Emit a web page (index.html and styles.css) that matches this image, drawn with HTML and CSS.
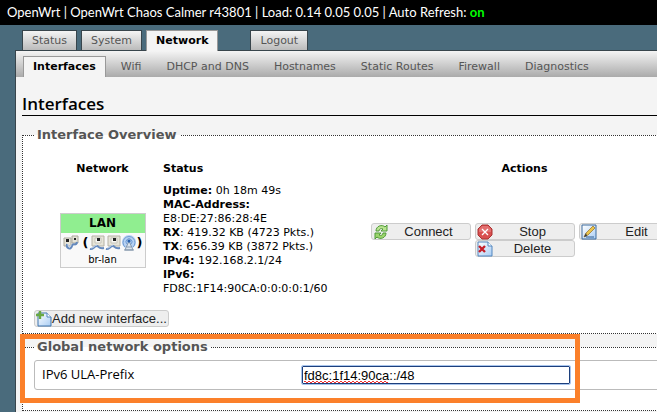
FILE: index.html
```html
<!DOCTYPE html>
<html lang="en">
<head>
<meta charset="utf-8">
<title>OpenWrt - Interfaces</title>
<link rel="stylesheet" href="styles.css">
</head>
<body>
<svg class="defs" aria-hidden="true">
  <defs>
    <linearGradient id="paper" x1="0" y1="0" x2="1" y2="1"><stop offset="0" stop-color="#fff"/><stop offset="1" stop-color="#a9cdf4"/></linearGradient>
    <symbol id="port" viewBox="0 0 16 16">
      <path d="M3 1h12v10H3z" fill="#e6e4d8" stroke="#b5b2a5"/>
      <path d="M6 3h6v5H6z" fill="#f8f8f4" stroke="#c6c4ba"/>
      <path d="M8 3h3v3H8z" fill="#222"/>
      <path d="M1 14c3 1 4-3 7-3 2 0 1 3 7 2" fill="none" stroke="#6489bd" stroke-width="2"/>
      <path d="M2 13c3 0 4-3 6-3" fill="none" stroke="#bfd3ef"/>
    </symbol>
    <symbol id="bridge" viewBox="0 0 16 16">
      <path d="M1 3h7v8H1zM9 1h6v7H9z" fill="#e6e4d8" stroke="#aaa89c"/>
      <path d="M3 4h3v3H3zM11 3h2v2h-2z" fill="#222"/>
      <path d="M4 9c-1 5 4 6 5 2s4 1 5-4" fill="none" stroke="#6489bd" stroke-width="2"/>
      <path d="M5 9c0 4 2 4 3 1" fill="none" stroke="#c4d5ef"/>
    </symbol>
  </defs>
</svg>

<header class="topbar">OpenWrt | OpenWrt Chaos Calmer r43801 | Load: 0.14 0.05 0.05 | Auto Refresh: <a class="refresh" href="#">on</a></header>

<div class="page">
  <nav class="tabs main-tabs" aria-label="Main">
    <a href="#">Status</a>
    <a href="#">System</a>
    <a href="#" class="active">Network</a>
    <a href="#" class="logout">Logout</a>
  </nav>
  <main class="panel">
    <nav class="tabs sub-tabs" aria-label="Network">
      <a href="#" class="active">Interfaces</a>
      <a href="#">Wifi</a>
      <a href="#">DHCP and DNS</a>
      <a href="#">Hostnames</a>
      <a href="#">Static Routes</a>
      <a href="#">Firewall</a>
      <a href="#">Diagnostics</a>
    </nav>
    <div class="content">
      <h1>Interfaces</h1>

      <fieldset class="section overview">
        <legend>Interface Overview</legend>
        <table class="networks">
          <thead>
            <tr><th class="col-network">Network</th><th class="col-status">Status</th><th class="col-actions">Actions</th></tr>
          </thead>
          <tbody>
            <tr>
              <td>
                <div class="ifacebox">
                  <strong class="iface-name">LAN</strong>
                  <div class="iface-ports">
                    <svg class="icon bridge"><use href="#bridge"/></svg>
                    <b>(</b><svg class="icon"><use href="#port"/></svg><svg class="icon"><use href="#port"/></svg><svg class="icon" viewBox="0 0 16 16"><circle cx="8" cy="7" r="7" fill="#b7d2f3"/><path d="M4 12A6 6 0 1 1 12 12M6 9A3 3 0 1 1 10 9" fill="none" stroke="#6f9ad2"/><path d="M8 6l-4 9h8z" fill="#dce5ee" stroke="#8497ad"/><path d="M6 12h4M3 15h10" stroke="#8799ad"/><circle cx="8" cy="6" r="1.6" fill="#2860ad"/></svg><b>)</b>
                  </div>
                  <div class="iface-device">br-lan</div>
                </div>
              </td>
              <td class="status">
                <strong>Uptime:</strong> 0h 18m 49s<br>
                <strong>MAC-Address:</strong><br>
                E8:DE:27:86:28:4E<br>
                <strong>RX</strong>: 419.32 KB (4723 Pkts.)<br>
                <strong>TX</strong>: 656.39 KB (3872 Pkts.)<br>
                <strong>IPv4:</strong> 192.168.2.1/24<br>
                <strong>IPv6:</strong><br>
                FD8C:1F14:90CA:0:0:0:0:1/60
              </td>
              <td>
                <div class="actions">
                  <button type="button"><svg class="icon" viewBox="0 0 16 16"><path d="M3 7c0-5 6-7 9-4l2-2v6H8l2-2C8 4 6 5 6 7z" fill="#b9e390" stroke="#4f9a38"/><path d="M13 9c0 5-6 7-9 4l-2 2V9h6l-2 2c2 1 4 0 4-2z" fill="#9bd46c" stroke="#4f9a38"/></svg><span>Connect</span></button>
                  <button type="button"><svg class="icon" viewBox="0 0 16 16"><path d="M5 1h6l4 4v6l-4 4H5l-4-4V5z" fill="#d94f4f" stroke="#a93232"/><path d="M5 2h6l3 3v3H2V5z" fill="#e98787" opacity=".6"/><path d="M5 5l6 6M11 5l-6 6" stroke="#fff" stroke-width="1.3"/></svg><span>Stop</span></button>
                  <button type="button"><svg class="icon" viewBox="0 0 16 16"><path d="M1 1h14v14H1z" fill="url(#paper)" stroke="#3b6a9e"/><path d="M3 13l2-4 7-7 2 2-7 7z" fill="#eac44a" stroke="#9b7a38" stroke-width=".8"/><path d="M3 13l2-4 1 3z" fill="#3d3d3d"/><path d="M5 13h8" stroke="#2e5c91"/></svg><span>Edit</span></button>
                  <button type="button"><svg class="icon" viewBox="0 0 16 16"><path d="M1 1h10l4 4v10H1z" fill="url(#paper)" stroke="#5286be"/><path d="M11 1v4h4" fill="#fff" stroke="#5286be"/><path d="M2 5l6 6M8 5l-6 6" stroke="#c51f2a" stroke-width="2.4"/></svg><span>Delete</span></button>
                </div>
              </td>
            </tr>
          </tbody>
        </table>
        <button type="button" class="add"><svg class="icon" viewBox="0 0 16 16"><path d="M2 2h9l4 4v9H2z" fill="url(#paper)" stroke="#3e74ae"/><path d="M11 2v4h4" fill="#fff" stroke="#5286be"/><path d="M4 0v8M0 4h8" stroke="#69a842" stroke-width="2.4"/></svg>Add new interface...</button>
      </fieldset>

      <div class="globals">
        <fieldset class="section">
          <legend>Global network options</legend>
          <div class="option">
            <label for="ula">IPv6 ULA-Prefix</label>
            <div class="field">
              <input id="ula" type="text" value="fd8c:1f14:90ca::/48" spellcheck="false">
              <span class="squiggle"></span>
            </div>
          </div>
        </fieldset>
        <div class="highlight"></div>
      </div>
    </div>
  </main>
</div>
</body>
</html>
```
FILE: styles.css
```css
* { box-sizing: border-box; }

html { overflow: hidden; }

body {
  margin: 0;
  overflow: hidden;
  background: #4a6b7c;
  color: #000;
  font: 11px/14px "DejaVu Sans", Verdana, sans-serif;
}

a { color: inherit; text-decoration: none; }

.defs { position: absolute; width: 0; height: 0; }
.icon { width: 16px; height: 16px; flex: none; }

.topbar {
  padding: 0 7px;
  background: #000;
  color: #fff;
  font: 13px/25px Lato, "Trebuchet MS", sans-serif;
  white-space: nowrap;
}
.refresh { color: #0f0; font-weight: bold; }

.page { min-width: 708px; padding: 5px 0 0 15px; }

.tabs { display: flex; gap: 4px; white-space: nowrap; }
.tabs a {
  padding: 3px 9px 0;
  border: 1px solid transparent;
  border-bottom: 0;
  color: #555;
}
.tabs .active { color: #000; font-weight: bold; background: #f4f4f4; }

.main-tabs { padding-left: 7px; }
.main-tabs a {
  height: 20px;
  border-color: #38454c;
  background: linear-gradient(#f4f4f4, #bbb);
}
.main-tabs .active { height: 21px; margin-bottom: -1px; border-color: #999; position: relative; }
.main-tabs .logout { margin-left: 28px; }

.panel {
  border: 1px solid #38454c;
  border-width: 1px 0 0 1px;
  background: #f4f4f4;
}

.sub-tabs {
  gap: 5px;
  padding: 5px 7px 0;
  background: linear-gradient(#f4f4f4, #aaa);
}
.sub-tabs a { height: 21px; }
.sub-tabs .active { border-color: #999; }

.content { padding: 16px 6px 20px; }

h1 {
  margin: 0 0 12px;
  border-bottom: 1px solid #000;
  font: 600 17px/22px "Open Sans", "Trebuchet MS", sans-serif;
}

.section {
  min-width: 0;
  margin: 0;
  padding: 0 11px 6px;
  border: 1px dotted #333;
  background: #fff;
}
.section legend {
  padding: 0 3px;
  color: #555;
  font: bold 13px/14px "DejaVu Sans", Verdana, sans-serif;
}

.networks {
  width: calc(100% - 12px);
  margin-left: 12px;
  border-collapse: collapse;
  table-layout: fixed;
}
.networks th { padding: 20px 4px 0; height: 42px; vertical-align: top; }
.networks td { padding: 0; }
.col-network { width: 113px; }
.networks .col-status { width: 200px; text-align: left; }
.networks .status { padding: 0 4px; white-space: nowrap; }

.ifacebox {
  width: 86px;
  margin: 0 auto;
  border: 1px solid #ccc;
  background: #f9f9f9;
  text-align: center;
}
.iface-name { display: block; background: #90ee90; line-height: 19px; font-size: 12px; }
.iface-ports { display: flex; align-items: center; justify-content: center; height: 20px; }
.iface-ports b { font-size: 13px; }
.iface-ports .bridge { margin-right: 4px; }
.iface-device { font-size: 10px; line-height: 14px; }

button {
  display: flex;
  align-items: center;
  height: 17px;
  padding: 0 1px;
  border: 1px solid #ccc;
  border-radius: 3px;
  background: #eee;
  color: #222;
  font: 13px/15px "Liberation Sans", Arial, sans-serif;
}
button span { flex: 1; text-align: center; }
.actions { display: flex; flex-wrap: wrap; justify-content: center; column-gap: 4px; }
.actions button { width: 100px; }
.add { margin-top: 14px; white-space: nowrap; }

.globals { position: relative; margin-top: 6px; }
.option {
  display: flex;
  align-items: flex-start;
  margin: 6px 0 14px;
  padding: 5px 7px;
  min-height: 30px;
  border: 1px solid #bbb;
  border-radius: 3px;
  font: 13px/16px "Open Sans", Tahoma, sans-serif;
}
.option label { width: 260px; }
.field { position: relative; }
.field input {
  display: block;
  width: 268px;
  height: 18px;
  padding: 0 1px;
  border: 1px solid #1c3f7c;
  outline: 1px solid #a8c4ec;
  border-radius: 1px;
  background: #fff;
  font: 13px/16px "Liberation Sans", Arial, sans-serif;
}
.squiggle {
  position: absolute;
  left: 2px;
  bottom: 1px;
  width: 84px;
  height: 2px;
  background:
    repeating-linear-gradient(90deg, #e33 0 2px, transparent 2px 4px) 0 0 / 100% 1px no-repeat,
    repeating-linear-gradient(90deg, transparent 0 2px, #e33 2px 4px) 0 1px / 100% 1px no-repeat;
}
.highlight {
  position: absolute;
  top: -6px;
  left: -2px;
  width: 560px;
  height: 69px;
  border: 5px solid #fb802a;
  pointer-events: none;
}
```
